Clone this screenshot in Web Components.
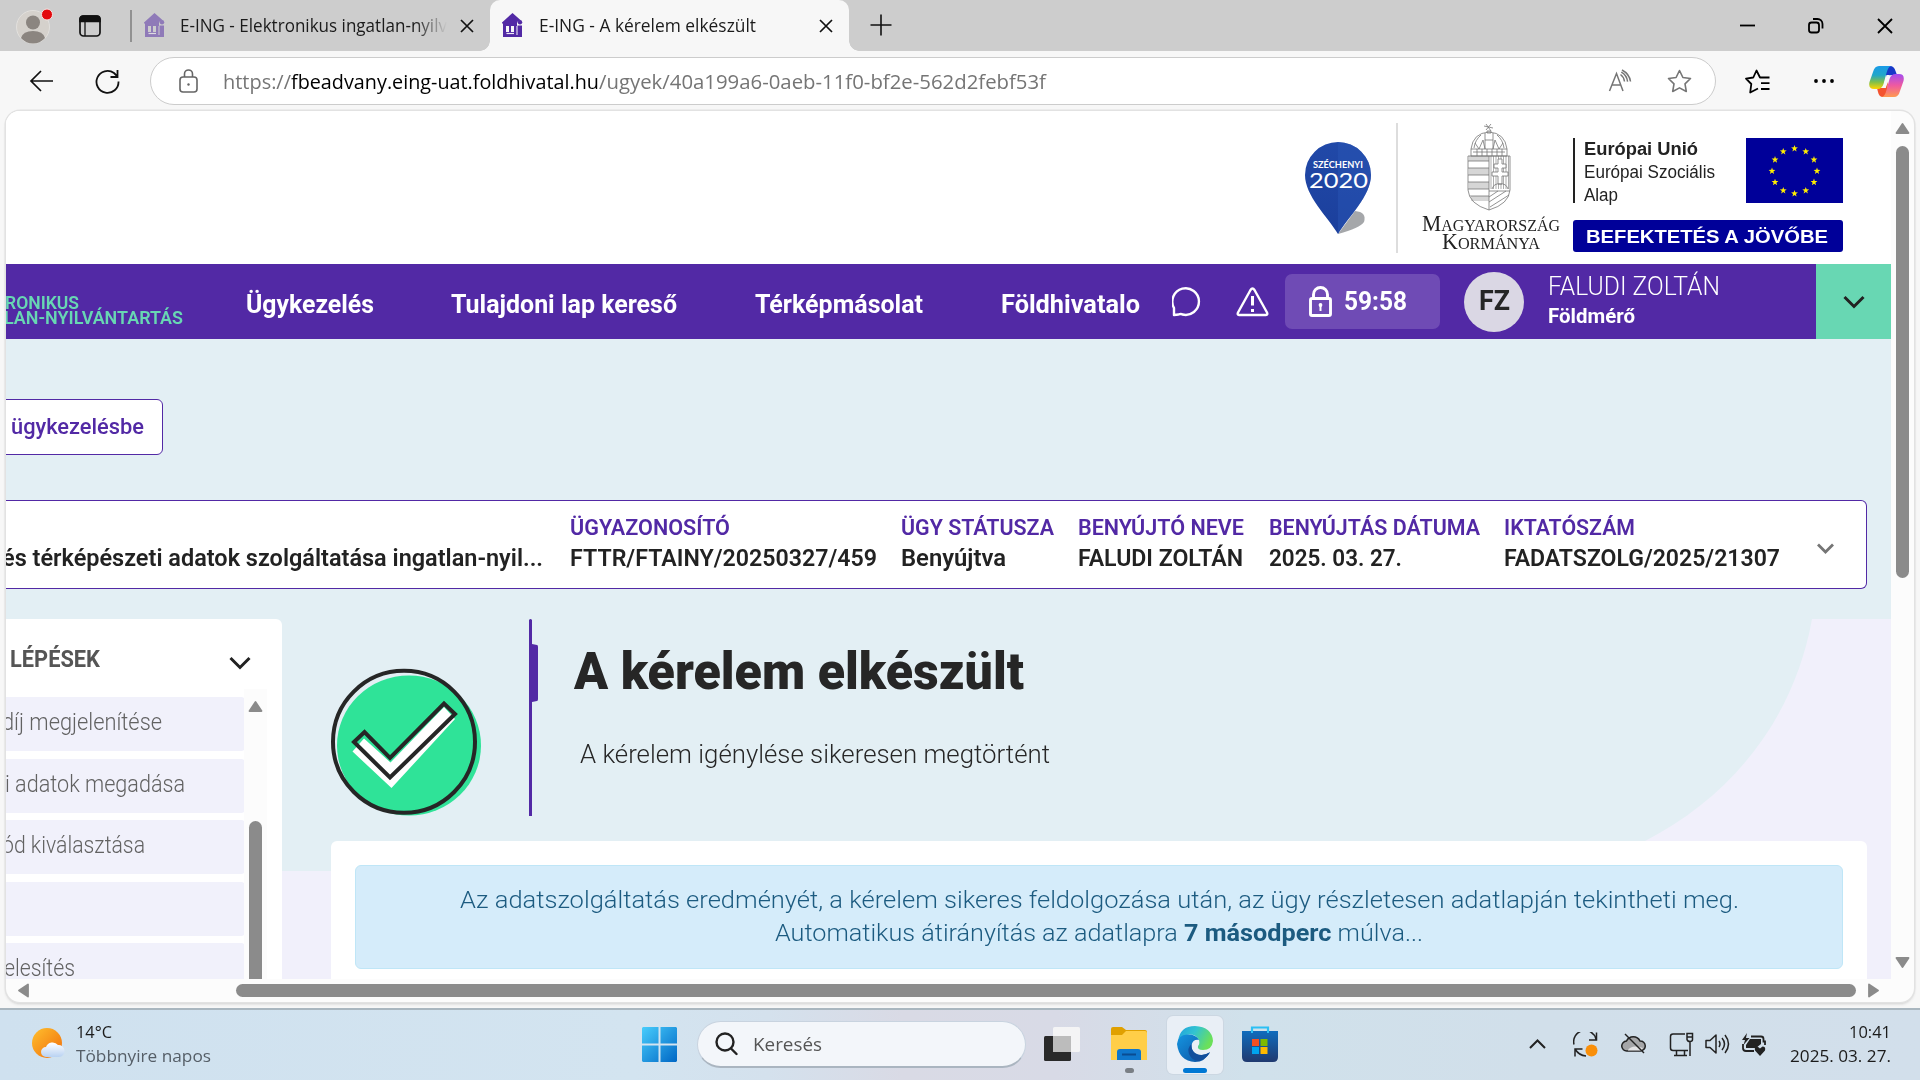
<!DOCTYPE html>
<html lang="hu">
<head>
<meta charset="utf-8">
<title>E-ING - A kérelem elkészült</title>
<style>
html,body{margin:0;padding:0}
body{width:1920px;height:1080px;overflow:hidden;background:#f7f7f7;font-family:"Open Sans","Noto Sans",sans-serif;color:#1b1b1b}
</style>
</head>
<body>
<desktop-shell></desktop-shell>
<script>
function def(name, css, html){
  const tpl=document.createElement('template');
  tpl.innerHTML=`<style>:host{display:block;box-sizing:border-box}*{box-sizing:border-box}svg{display:block;flex:none}${css}</style>${html}`;
  customElements.define(name, class extends HTMLElement{
    constructor(){super();this.attachShadow({mode:'open'}).append(tpl.content.cloneNode(true));}
  });
}
const X='<svg width="14" height="14" viewBox="0 0 14 14" stroke="#111" stroke-width="1.7" fill="none"><path d="M1 1l12 12M13 1L1 13"/></svg>';
const UI='"Roboto","Noto Sans",sans-serif';

def('desktop-shell',`:host{display:flex;flex-direction:column;width:1920px;height:1080px;overflow:hidden}`,
`<edge-tabs></edge-tabs><edge-toolbar></edge-toolbar><page-frame></page-frame><win-taskbar></win-taskbar>`);

def('house-icon',`:host{width:21px;height:25px;flex:none}`,
`<svg width="21" height="25" viewBox="0 0 21 25" fill="#5229a5"><path d="M10.500 0L19 7.500Q15 7.500 15 10.500H0V9.500Z"/><circle cx="18" cy="9.200" r="2.200"/><path d="M1 12.500H4V19H7V12.500H9V19H12V12.500H14.500V22H15.500V12.500H20V24H1Z"/><path d="M1 9h14v4H1Z"/><path d="M4.500 20.500H12" stroke="#fff" stroke-opacity=".9" stroke-width="1.200"/></svg>`);

def('edge-tabs',`:host{height:51px;background:#cdcdcd;display:flex;align-items:stretch;flex:none}
.l{display:flex;align-items:center;width:490px;padding-left:16px}
.tab{width:359px;background:#f7f7f7;border-radius:10px 10px 0 0;display:flex;align-items:center;padding-left:12px}
.c{width:10px;height:10px;align-self:flex-end;flex:none}
.c1{background:radial-gradient(circle at 0 0,#cdcdcd 9.500px,#f7f7f7 10px);margin-left:-10px}
.c2{background:radial-gradient(circle at 100% 0,#cdcdcd 9.500px,#f7f7f7 10px)}
.fade{-webkit-mask:linear-gradient(90deg,#000 88%,transparent 100%);mask:linear-gradient(90deg,#000 88%,transparent 100%);margin-left:15px}
t-x{margin-top:-1px}
.x{flex:1;display:flex;justify-content:flex-end;align-items:center;padding-right:27px}`,
`<div class="l">
<svg width="37" height="37" viewBox="0 0 37 37"><circle cx="17" cy="20" r="16.500" fill="#d5d1cc" stroke="#e2e0dd"/><circle cx="17" cy="15.500" r="7" fill="#8b8580"/><path d="M5 31q2-7 12-7t12 7q-5 5.500-12 5.500T5 31Z" fill="#8b8580"/><circle cx="31" cy="7.500" r="5.500" fill="#e3090d" stroke="#f3e4e2"/></svg>
<svg style="margin-left:26px" width="22" height="22" viewBox="0 0 22 22" fill="none" stroke="#111" stroke-width="1.700"><rect x="1" y="1" width="20" height="20" rx="3.500"/><path d="M1 6.500V4a3 3 0 0 1 3-3h14a3 3 0 0 1 3 3v2.500Z" fill="#111"/><path d="M6 7v14" stroke-width="1.300"/></svg>
<svg style="margin-left:29px" width="2" height="32"><path d="M1 0v32" stroke="#7c7c7c" stroke-width="1.500"/></svg>
<house-icon style="margin-left:12px;opacity:.5"></house-icon>
<t-x class="fade" w="267" s="18" h="26">E-ING - Elektronikus ingatlan-nyilv</t-x>
<span style="margin-left:13px">${X}</span></div>
<i class="c c1"></i><div class="tab"><house-icon></house-icon><t-x style="margin-left:16px" w="217" s="18" h="26">E-ING - A kérelem elkészült</t-x><span style="margin-left:63px">${X}</span></div><i class="c c2"></i>
<svg style="margin:14px 0 0 11px" width="22" height="22" viewBox="0 0 22 22" stroke="#111" stroke-width="1.600"><path d="M11 .5v21M.5 11h21"/></svg>
<div class="x"><svg width="154" height="18" viewBox="0 0 154 18" fill="none" stroke="#000" stroke-width="1.800"><path d="M1 8.500h15"/><rect x="70" y="5.500" width="10" height="10" rx="2.500"/><path d="M74 2h4.500a5 5 0 0 1 5 5v4.500"/><path d="M139 2l14 14M153 2L139 16"/></svg></div>`);

def('edge-toolbar',`:host{height:60px;flex:none;display:flex;align-items:center;padding:0 0 0 29px;background:#f7f7f7}
.pill{margin-left:30px;width:1566px;height:48px;border:1.500px solid #ccc;border-radius:24px;background:#fff;display:flex;align-items:center;padding-left:28px;color:#757575}
t-x{flex:none}`,
`<svg width="25" height="22" viewBox="0 0 25 22" fill="none" stroke="#111" stroke-width="1.700"><path d="M24 11H2M12 1L2 11l10 10"/></svg>
<svg style="margin-left:41px" width="25" height="25" viewBox="0 0 25 25" fill="none" stroke="#111" stroke-width="1.800"><path d="M23.500 12.500A11 11 0 1 1 19 4l3.500 3.500M22.500 1v7h-7"/></svg>
<div class="pill">
<svg width="19" height="24" viewBox="0 0 19 24" fill="none" stroke="#666" stroke-width="1.600"><rect x="1" y="8" width="17" height="15" rx="3"/><path d="M5.500 8V5a4 4 0 0 1 8 0v3"/><circle cx="9.500" cy="15.500" r="1.200" fill="#666" stroke="none"/></svg>
<t-x style="margin-left:25px" w="68" s="20.500" h="30">https://</t-x><t-x style="color:#000" w="308" s="20.500" h="30">fbeadvany.eing-uat.foldhivatal.hu</t-x><t-x w="447" s="20.500" h="30">/ugyek/40a199a6-0aeb-11f0-bf2e-562d2febf53f</t-x>
<svg style="margin-left:562px" width="24" height="24" viewBox="0 0 24 24" fill="none" stroke="#757575" stroke-width="1.500"><path d="M1.500 22L8.500 4.500L15 22M4 16h9"/><path d="M12.500 5.500q3.500 2.500 4 7M14 1q7.500 4 8.500 11.500M13.300 3.200q5.500 3 6.300 9.500"/></svg>
<svg style="margin-left:35px" width="25" height="25" viewBox="0 0 25 25" fill="none" stroke="#757575" stroke-width="1.600" stroke-linejoin="round"><path d="M12.500 1.500l3.400 7 7.600 1-5.500 5.400 1.300 7.600-6.800-3.600-6.800 3.600 1.300-7.600-5.500-5.400 7.600-1Z"/></svg>
</div>
<svg style="margin-left:29px" width="25" height="25" viewBox="0 0 25 25" fill="none" stroke="#000" stroke-width="1.800" stroke-linejoin="round"><path d="M16 8.500L15 8.500L11.500 1.500 8.300 8.500 1 9.600 6.300 15 5.200 23.500 13 19.500M16 8.500h8.500M16 14.200h8.500M16 20h8.500"/></svg>
<svg style="margin-left:44px" width="20" height="4"><circle cx="2" cy="2" r="1.900"/><circle cx="10" cy="2" r="1.900"/><circle cx="18" cy="2" r="1.900"/></svg>
<svg style="margin-left:35px" width="35" height="31" viewBox="0 0 35 31"><defs><linearGradient id="a" x1="0" y1="0" x2="0" y2="1"><stop offset="0" stop-color="#1a9be8"/><stop offset=".4" stop-color="#21a7c9"/><stop offset=".7" stop-color="#7fbf4a"/><stop offset="1" stop-color="#ffd500"/></linearGradient><linearGradient id="b" x1="0" y1="0" x2="0" y2="1"><stop offset="0" stop-color="#a34cf0"/><stop offset=".5" stop-color="#ef5aa0"/><stop offset="1" stop-color="#ff9a50"/></linearGradient></defs>
<path d="M17 0h4q4 0 5.500 5l1.500 4h-5q-4 0-6 5Z" fill="#1738c8"/><path d="M18 31h-4q-4 0-5-5l-1-4h5q4 0 6-6Z" fill="#f4532f"/><path d="M10 0h12q-3 1-4.500 7l-3 11q-1.500 5-6 5H5q-6 0-4.500-7L4 6Q5.500 0 10 0Z" fill="url(#a)"/><path d="M25 31H13q3-1 4.500-7l3-11q1.500-5 6-5H30q6 0 4.500 7L31 25q-1.500 6-6 6Z" fill="url(#b)"/><path d="M17.500 9h3.500q-1.500 2-2.200 5l-2 8h-4q2-1.500 2.500-4.500Z" fill="#f7f7f7"/></svg>`);

def('scroll-arrow',`:host{width:15px;height:11px;flex:none}`,
`<svg width="15" height="11" viewBox="0 0 15 11"><path d="M7.500 1L13.500 10H1.500Z" fill="#8b8b8b" stroke="#8b8b8b" stroke-width="1.800" stroke-linejoin="round"/></svg>`);

def('page-frame',`:host{flex:none;height:897px;padding-left:6px;background:#f7f7f7}
.f{width:1908px;height:891px;display:grid;grid-template:868px 23px/1885px 23px;border-radius:14px;overflow:hidden;background:#fcfcfc;box-shadow:0 0 0 1.500px #e2e2e2,0 2px 3px #ccc}
.v{overflow:hidden;background:#fff}
.sv{display:flex;flex-direction:column;align-items:center;padding-top:12px}
.sv i{width:13px;height:432px;margin:12px 0 379px;border-radius:7px;background:#8b8b8b;flex:none}
.sh{display:flex;align-items:center;padding-left:10px}
.sh i{width:1620px;height:13px;margin:0 10px 0 205px;border-radius:7px;background:#8b8b8b}`,
`<div class="f"><div class="v"><logo-strip></logo-strip><site-nav></site-nav><case-page></case-page></div>
<div class="sv"><scroll-arrow></scroll-arrow><i></i><scroll-arrow style="transform:rotate(180deg)"></scroll-arrow></div>
<div class="sh"><scroll-arrow style="transform:rotate(-90deg)"></scroll-arrow><i></i><scroll-arrow style="transform:rotate(90deg)"></scroll-arrow></div></div>`);

const star=(x,y,r)=>{let p='';for(let i=0;i<10;i++){const a=-Math.PI/2+i*Math.PI/5,q=i%2?r*.4:r;p+=(x+q*Math.cos(a)).toFixed(1)+','+(y+q*Math.sin(a)).toFixed(1)+' ';}return `<polygon points="${p}"/>`;};
const stars=[...Array(12)].map((_,i)=>star(48.5+22.5*Math.sin(i*Math.PI/6),33-22.5*Math.cos(i*Math.PI/6),3.6)).join('');
const vl=(x0,x1,y0,y1,d)=>{let p='';for(let x=x0;x<=x1;x+=d)p+=`M${x} ${y0}V${y1}`;return p;};
def('logo-strip',`:host{height:153px;background:#fff;display:flex;align-items:flex-start;padding:12px 48px 0 1299px}
.g{width:138px;flex:none;margin-left:24px;display:flex;flex-direction:column;align-items:center;font-family:"Liberation Serif",serif;color:#222}
.g small{font-size:17px}
.e{width:270px;flex:none;margin-left:13px;padding-top:15px;display:flex;flex-direction:column;justify-content:space-between;height:129px;font-family:"Liberation Sans",sans-serif}
.r{display:flex;justify-content:space-between}
.t{border-left:2px solid #222;padding:0 0 0 9px;height:65px;color:#222}
.b{height:32px;background:#009;border-radius:3px;color:#fff;font-weight:700;padding:5px 0 0 13px}`,
`<svg style="margin-top:19px" width="68" height="93" viewBox="0 0 68 93"><defs><linearGradient id="p" x1="0" y1="0" x2="0" y2="1"><stop offset="0" stop-color="#2149a8"/><stop offset="1" stop-color="#1b3f9c"/></linearGradient></defs><path d="M33 92Q55 86 59 80Q62 70 50 69Z" fill="#a5a7aa"/><path d="M33 92C23 75 0 54 0 33A33 33 0 0 1 66 33C66 54 43 75 33 92Z" fill="url(#p)"/><path d="M33 92C43 75 66 54 66 33A33 33 0 0 0 33 0V40Z" fill="#2b57b5" opacity=".45"/><text x="8" y="25.500" font-family="Lato,sans-serif" font-weight="700" font-size="9" fill="#fff" textLength="50" lengthAdjust="spacingAndGlyphs">SZÉCHENYI</text><text x="4" y="46" font-family="Lato,sans-serif" font-weight="400" font-size="21.500" fill="#fff" textLength="59" lengthAdjust="spacingAndGlyphs">2020</text></svg>
<div style="width:1.500px;flex:none;height:130px;background:#ddd;margin-left:23px"></div>
<div class="g"><svg style="margin-left:-3px" width="44" height="88" viewBox="0 0 44 88" fill="none" stroke="#777" stroke-width=".8"><path d="M19 1l5 7M24 1l-5 6M17 3l9 2M20 8h4v2h-4ZM4 26Q6 10 22 9Q38 10 40 26M4 26h36v7H4ZM14 12q-6 5-7 13M30 12q6 5 7 13M18 10v16M26 10v16M18 17h8M8 20l4 6 4-9 2 9M36 20l-4 6-4-9-2 9M6 29h32M10 26v7M15 26v7M20 26v7M25 26v7M30 26v7M35 26v7"/><path d="M1 33h42v34q-1 14-21 20Q2 81 1 67ZM22 33v54"/><path d="${vl(3,21,33,38,2)}${vl(3,21,45,52,2)}${vl(3,21,59,66,2)}${vl(5,21,73,78,2)}${vl(24,42,33,66,2.5)}" stroke-width=".6"/><path d="M1 38h21M1 45h21M1 52h21M1 59h21M1 66h21M3 73h19M22 68h21M22 79L39 68M22 74L31 68M23 84L42 72"/><path d="M31 36h4v5h4v4h-4v4h6v4h-6v8h-4v-8h-6v-4h6v-4h-4v-4h4Z" fill="#fff"/><path d="M25 66q2-6 8-5q6-1 8 5"/></svg>
<t-x style="margin-top:3px" w="138" s="23" h="20">M<small>AGYARORSZÁG</small></t-x><t-x style="margin-top:-2px" w="98" s="23" h="20">K<small>ORMÁNYA</small></t-x></div>
<div class="e"><div class="r"><div class="t"><t-x style="font-weight:700" w="114" s="17.500" h="23">Európai Unió</t-x><t-x w="131" s="17.500" h="23">Európai Szociális</t-x><t-x w="34" s="17.500" h="23">Alap</t-x></div>
<svg width="97" height="65" viewBox="0 0 97 65"><rect width="97" height="65" fill="#009"/><g fill="#ffed00">${stars}</g></svg></div>
<div class="b"><t-x w="242" s="18.500" h="24">BEFEKTETÉS A JÖVŐBE</t-x></div></div>`);

def('site-nav',`:host{height:75px;background:#5229a5;display:flex;align-items:center;color:#fff;font-weight:700;font-family:${UI};overflow:hidden}
t-x,svg,div{flex:none}.m{margin-top:7px}
.logo{width:240px;color:#68d7b3;padding-top:17px;margin-left:-1px}
.lock{width:155px;height:55px;border-radius:7px;background:#6f4bb5;margin-left:16px;display:flex;align-items:center;padding-left:24px}
.av{width:60px;height:60px;border-radius:50%;background:#dad7e4;color:#262626;margin-left:24px;display:flex;align-items:center;justify-content:center}
.dd{width:75px;height:75px;background:#68d7b3;display:flex;align-items:center;justify-content:center;margin-left:auto}`,
`<div class="logo"><t-x style="font-weight:600" w="74" s="18" h="15">RONIKUS</t-x><t-x style="font-weight:600;margin-left:-1px" w="179" s="18" h="15">LAN-NYILVÁNTARTÁS</t-x></div>
<t-x class="m" style="margin-left:1px" w="128" s="25" h="30">Ügykezelés</t-x><t-x class="m" style="margin-left:77px" w="226" s="25" h="30">Tulajdoni lap kereső</t-x><t-x class="m" style="margin-left:78px" w="168" s="25" h="30">Térképmásolat</t-x><t-x class="m" style="margin-left:78px" w="139" s="25" h="30">Földhivatalo</t-x>
<svg style="margin-left:32px" width="30" height="30" viewBox="0 0 30 30" fill="none" stroke="#fff" stroke-width="2.400" stroke-linejoin="round"><path d="M2 28V21A13.300 13.300 0 1 1 10.500 27.500Q9 26.500 6.500 27.500Z"/></svg>
<svg style="margin-left:34px" width="33" height="30" viewBox="0 0 33 30" fill="none" stroke="#fff" stroke-width="2.400" stroke-linejoin="round"><path d="M16.500 1.500Q17.500 1.500 18.500 3L31 25.500Q32 28 30 28H3Q1 28 2 25.500L14.500 3Q15.500 1.500 16.500 1.500Z"/><path d="M16.500 9v9.500M16.500 22v3" stroke-width="3"/></svg>
<div class="lock"><svg width="23" height="31" viewBox="0 0 23 31" fill="none" stroke="#fff" stroke-width="2.900"><rect x="1.500" y="12.500" width="20" height="17" rx="1.500"/><path d="M4.500 12.500V8.500a7 7 0 0 1 14 0v4"/><circle cx="11.500" cy="19" r="1.900" fill="#fff" stroke="none"/><path d="M11.500 19v6" stroke-width="2"/></svg><t-x style="margin:-2px 0 0 12px" w="63" s="25.500" h="30">59:58</t-x></div>
<div class="av"><t-x style="margin-top:-2px" w="31" s="27" h="30">FZ</t-x></div>
<div style="margin:0 0 1px 24px"><t-x style="font-weight:300" w="172" s="25" h="30">FALUDI ZOLTÁN</t-x><t-x w="87" s="19.500" h="29">Földmérő</t-x></div>
<div class="dd"><svg width="22" height="14" viewBox="0 0 22 14" fill="none" stroke="#222" stroke-width="3"><path d="M1.500 2l9.500 9.500L20.500 2"/></svg></div>`);

def('info-pair',`:host{flex:none;font-family:${UI}}`,`<slot></slot>`);
const pair=(l,lw,v,vw,m)=>`<info-pair style="margin-left:${m}px"><t-x style="color:#5229a5;font-weight:600" w="${lw}" s="22" h="31">${l}</t-x><t-x style="font-weight:600" w="${vw}" s="23.500" h="31">${v}</t-x></info-pair>`;
def('case-summary',`:host{width:1862px;margin-left:-1px;height:89px;background:#fff;border:1.500px solid #5229a5;border-left:0;border-radius:0 6px 6px 0;display:flex;padding:11px 0 0 0;color:#222;font-family:${UI}}
svg{margin:31px 0 0 37px}`,
`<t-x style="margin:31px 0 0 -3px;font-weight:600;flex:none" w="541" s="23.500" h="31">és térképészeti adatok szolgáltatása ingatlan-nyil...</t-x>
${pair('ÜGYAZONOSÍTÓ',160,'FTTR/FTAINY/20250327/459',307,27)}${pair('ÜGY STÁTUSZA',153,'Benyújtva',105,24)}${pair('BENYÚJTÓ NEVE',166,'FALUDI ZOLTÁN',165,24)}${pair('BENYÚJTÁS DÁTUMA',211,'2025. 03. 27.',133,25)}${pair('IKTATÓSZÁM',131,'FADATSZOLG/2025/21307',276,24)}
<svg width="17" height="12" viewBox="0 0 17 12" fill="none" stroke="#757575" stroke-width="2.800"><path d="M1 1.500l7.500 7.500L16 1.500"/></svg>`);

def('step-item',`:host{height:54px;width:239px;background:#f1f1fb;border-radius:0 4px 4px 0;margin-bottom:7.500px;padding-top:11px;color:#626262;font-family:${UI};font-weight:300}`,`<slot></slot>`);
def('step-list',`:host{width:276px;height:360px;background:#fff;border-radius:0 6px 0 0;overflow:hidden;flex:none}
.h{height:70px;display:flex;padding:26px 0 0 4px;color:#555;font-family:${UI};font-weight:700}
.b{display:flex}.l{padding-top:8px;width:238px}.s{width:23px;height:290px;background:#fcfcfc;display:flex;flex-direction:column;align-items:center;padding-top:12px}
.s i{width:13px;height:300px;border-radius:7px;background:#8b8b8b;margin-top:109px;flex:none}`,
`<div class="h"><t-x w="90" s="23" h="30">LÉPÉSEK</t-x><svg style="margin:11px 0 0 129px" width="22" height="14" viewBox="0 0 22 14" fill="none" stroke="#222" stroke-width="3"><path d="M1.500 2l9.500 9.500L20.500 2"/></svg></div>
<div class="b"><div class="l"><step-item><t-x style="margin-left:-4px" w="160" s="23" h="30">díj megjelenítése</t-x></step-item><step-item><t-x style="margin-left:-1px" w="180" s="23" h="30">i adatok megadása</t-x></step-item><step-item><t-x style="margin-left:-4px" w="143" s="23" h="30">ód kiválasztása</t-x></step-item><step-item></step-item><step-item><t-x style="margin-left:-2px" w="71" s="23" h="30">elesítés</t-x></step-item></div>
<div class="s"><scroll-arrow></scroll-arrow><i></i></div></div>`);

def('result-hero',`:host{height:222px;display:flex;align-items:flex-start;font-family:${UI};color:#262626}`,
`<svg style="margin-top:48px" width="152" height="150" viewBox="0 0 152 150"><ellipse cx="78" cy="78.500" rx="72" ry="70" fill="#2fe398"/><circle cx="73" cy="74.800" r="71" fill="none" stroke="#262626" stroke-width="4"/><path d="M21.500 84.500L33 71.500L59.500 95.500L113 40L124 52L60.500 121Z" fill="#fff"/><path d="M23 75L33.500 65L59 91L113 36.500L124 47L59 110.500Z" fill="none" stroke="#262626" stroke-width="4"/></svg>
<svg style="margin-left:46px" width="10" height="198" viewBox="0 0 10 198" fill="#5229a5"><path d="M0 1Q1.500-1 3 1V25L8 26Q9 26 9 28V80Q9 82 8 82L3 83V197H0Z"/></svg>
<div><t-x style="margin:23px 0 0 35px;font-weight:900" w="450" s="51.500" h="60">A kérelem elkészült</t-x><t-x style="margin:38px 0 0 41px;font-weight:300" w="470" s="25" h="30">A kérelem igénylése sikeresen megtörtént</t-x></div>`);

def('info-alert',`:host{height:104px;background:#d5ecfa;border:1.500px solid #bfe6f7;border-radius:6px;padding-top:17px;color:#1c5b80;font-family:${UI};font-weight:300;display:flex;flex-direction:column;align-items:center}`,
`<t-x w="1279" s="24.500" h="33">Az adatszolgáltatás eredményét, a kérelem sikeres feldolgozása után, az ügy részletesen adatlapján tekintheti meg.</t-x><t-x w="648" s="24.500" h="33">Automatikus átirányítás az adatlapra <b>7 másodperc</b> múlva...</t-x>`);

def('case-page',`:host{height:640px;background:#e3eff4;position:relative;padding-top:60px;isolation:isolate}
.bg{position:absolute;left:0;top:0;z-index:-1}
.btn{width:158px;height:56px;margin:0 0 45px -1px;border:1.500px solid #5229a5;border-radius:0 6px 6px 0;background:#fff;color:#5229a5;font-family:${UI};font-weight:500;padding:12px 0 0 5px}
.row{display:flex;margin-top:30px}
.main{width:1536px;margin-left:49px}
.card{height:140px;background:#fff;border-radius:6px 6px 0 0;padding:24px}`,
`<svg class="bg" width="1885" height="640" viewBox="6 339 1885 640" fill="#f1f0fb"><path d="M6 871H1580Q1620 860 1645 841C1735 795 1795 715 1812 619H1891V979H6Z"/></svg>
<div class="btn"><t-x w="133" s="22" h="30">ügykezelésbe</t-x></div>
<case-summary></case-summary>
<div class="row"><step-list></step-list><div class="main"><result-hero></result-hero><div class="card"><info-alert></info-alert></div></div></div>`);

def('win-taskbar',`:host{height:72px;flex:none;border-top:2px solid #a9b6bf;background:linear-gradient(90deg,#cfe1ef 0,#d3e4f0 33%,#d4e1ed 40%,#d9dae5 47%,#d8dae6 55%,#d0e1eb 65%,#d1dfea 80%,#d2dfeb);display:flex;align-items:center;padding:0 0 2px 30px}
t-x,svg,div{flex:none}
.q{width:329px;height:47px;margin-left:20px;border-radius:24px;background:#f3f6fa;border:1.500px solid #c8d3df;border-bottom:2.500px solid #aab5c0;display:flex;align-items:center;padding-left:17px;color:#555}
.e{width:56px;height:58px;border-radius:6px;background:#e9eff6;box-shadow:0 0 0 1px #ccd7e2;margin:2px 0 0 20px;display:flex;flex-direction:column;align-items:center;padding-top:10px}
.e i{width:24px;height:5px;border-radius:3px;background:#0078d4;margin-top:6px;flex:none}
.f{margin:2px 0 0 30px;display:flex;flex-direction:column;align-items:center;padding-top:10px}.f i{width:9px;height:5px;border-radius:3px;background:#7a7f85;margin-top:7px}`,
`<svg width="36" height="34" viewBox="0 0 36 34"><defs><linearGradient id="s" x1="0" y1="0" x2="1" y2="1"><stop offset="0" stop-color="#ffc02e"/><stop offset="1" stop-color="#f06c0a"/></linearGradient><linearGradient id="c" x1="0" y1="0" x2="0" y2="1"><stop offset="0" stop-color="#fff"/><stop offset="1" stop-color="#b9d2f2"/></linearGradient></defs><circle cx="17" cy="16" r="15" fill="url(#s)"/><path d="M16 30a5 5 0 0 1 0-10a7 7 0 0 1 12-2a6 6 0 0 1 1 12Z" fill="url(#c)"/></svg>
<div style="margin-left:10px"><t-x w="36" s="16.500" h="24">14°C</t-x><t-x style="color:#555e67" w="135" s="16.500" h="24">Többnyire napos</t-x></div>
<svg style="margin-left:431px" width="35" height="35" viewBox="0 0 35 35"><defs><linearGradient id="w" x1="0" y1="0" x2="1" y2="1"><stop offset="0" stop-color="#48cdfc"/><stop offset="1" stop-color="#0067c5"/></linearGradient></defs><path d="M1 0H16.500V16.500H0V1ZM18.500 0H34L35 1V16.500H18.500ZM0 18.500H16.500V35H1L0 34ZM18.500 18.500H35V34L34 35H18.500Z" fill="url(#w)"/></svg>
<div class="q"><svg width="23" height="24" viewBox="0 0 23 24" fill="none" stroke="#222" stroke-width="2.400" stroke-linecap="round"><circle cx="10" cy="10" r="8.500"/><path d="M16 16.500l5.500 5.500"/></svg><t-x style="margin-left:15px" w="69" s="18.500" h="28">Keresés</t-x></div>
<svg style="margin-left:18px" width="37" height="35" viewBox="0 0 37 35"><rect x="0" y="9" width="27" height="25" rx="1.500" fill="#292929"/><rect x="9" y="0" width="27" height="25" rx="1.500" fill="#f4f4f5"/><path d="M9 9h18v16H9Z" fill="#bcbcbc"/></svg>
<div class="f"><svg width="36" height="34" viewBox="0 0 36 34"><path d="M0 2Q0 0 2 0H11L15 3H34Q36 3 36 5V12H0Z" fill="#e0a000"/><path d="M0 8H11L15 4H34Q36 4 36 6V33H0Z" fill="#ffce48"/><path d="M6 33V25Q6 22 9 22H27Q30 22 30 25V33Z" fill="#0f77cc"/><path d="M11 27.500H25" stroke="#0a4c91" stroke-width="2"/></svg><i></i></div>
<div class="e"><svg width="36" height="36" viewBox="0 0 36 36"><defs><linearGradient id="g" x1="0" y1="0" x2="1" y2=".4"><stop offset="0" stop-color="#1f9fe0"/><stop offset=".5" stop-color="#33c4d0"/><stop offset="1" stop-color="#6be05a"/></linearGradient><linearGradient id="h" x1="0" y1="0" x2="1" y2="1"><stop offset="0" stop-color="#1595e0"/><stop offset="1" stop-color="#0c4fa0"/></linearGradient></defs><path d="M1 15Q3 0 18 0Q35 1 36 15Q35 24 26 24Q20 24 21 20Q23 18 22 14Q18 7 9 9Q3 11 1 15Z" fill="url(#g)"/><path d="M0 18Q1 9 10 8.500Q19 8 22 14Q16 13 14.500 19Q14 27 22 29Q28 30 33 26Q28 36 18 36Q2 35 0 18Z" fill="url(#h)"/><path d="M14.500 18Q10 22 12 28Q15 35 22 35Q29 33 33 26.500Q24 31 18 27Q14 24 14.500 18Z" fill="#124f9c"/></svg><i></i></div>
<svg style="margin-left:19px" width="36" height="36" viewBox="0 0 36 36"><defs><linearGradient id="m" x1="0" y1="0" x2="0" y2="1"><stop offset="0" stop-color="#0f6cbd"/><stop offset="1" stop-color="#203a70"/></linearGradient></defs><path d="M10 6V1.500H26V6" fill="none" stroke="#2cc0f4" stroke-width="2.200"/><path d="M0 5H36V31Q36 36 31 36H5Q0 36 0 31Z" fill="url(#m)"/><path d="M10 13h7v7h-7Z" fill="#f25022"/><path d="M18.500 13h7v7h-7Z" fill="#7fba00"/><path d="M10 21h7v7h-7Z" fill="#00a4ef"/><path d="M18.500 21h7v7h-7Z" fill="#ffb900"/><path d="M10 1.500V7M26 1.500V7" stroke="#2cc0f4" stroke-width="2"/></svg>
<svg style="margin-left:251px" width="17" height="10" viewBox="0 0 17 10" fill="none" stroke="#222" stroke-width="2"><path d="M1 9l7.500-7.500L16 9"/></svg>
<svg style="margin-left:27px" width="25" height="25" viewBox="0 0 25 25" fill="none" stroke="#222" stroke-width="1.500"><path d="M1 12.500A11 11 0 0 1 23 7M23.500 .5v7.500H16M2 24.500v-7.500h7.500M2 17q4 6.500 11 7"/><circle cx="18.500" cy="18.500" r="6" fill="#f98f0a" stroke="none"/></svg>
<svg style="margin-left:23px" width="25" height="22" viewBox="0 0 25 22" fill="none" stroke="#222" stroke-width="1.500"><path d="M6 18A5 5 0 0 1 5.500 8A7.500 7.500 0 0 1 19 8A5 5 0 0 1 19.500 18Z" fill="#a5a6a8"/><path d="M7 17q4-6 15-2l-2 2.500H7Z" fill="#e3e3e5" stroke="none"/><path d="M4 1l19 19"/></svg>
<svg style="margin-left:23px" width="25" height="25" viewBox="0 0 25 25" fill="none" stroke="#222" stroke-width="1.500"><path d="M16 2H4Q1.500 2 1.500 4.500V16Q1.500 18.500 4 18.500H19M7.500 19v4.500M15.500 19v4.500M5 23.500h13M21 10v14M18 1.500h5.500V7.500Q23.500 9.500 21 9.500T18 7.500ZM18 5h6"/></svg>
<svg style="margin-left:11px" width="25" height="22" viewBox="0 0 25 22" fill="none" stroke="#222" stroke-width="1.500" stroke-linejoin="round"><path d="M1 7.500H5L11 2V20L5 14.500H1ZM14 8q2 3 0 6M17 5q5 6 0 12M20 2q7 9 0 18"/></svg>
<svg style="margin-left:11px" width="26" height="25" viewBox="0 0 26 25" fill="none" stroke="#222" stroke-width="1.800"><path d="M10 4.500h10Q22.500 4.500 22.500 7v2.500h1.500V13M2 12v4Q2 19 5 19h8"/><path d="M9 7h11v5L15 16H5V13Z" fill="#222" stroke="none"/><path d="M6 1L1 8h3L2.500 13L8.500 6H5Z" fill="#222" stroke="none"/><path d="M19 24L14 18.500Q13 14.500 16.500 14.500L19 16.500L21.500 14.500Q25 14.500 24 18.500Z" fill="#222" stroke="none"/></svg>
<div style="margin-left:auto;padding-right:29px;display:flex;flex-direction:column;align-items:flex-end"><t-x w="42" s="16.500" h="24">10:41</t-x><t-x w="101" s="16.500" h="24">2025. 03. 27.</t-x></div>`);

/* One line of text, set to an exact advance width: w = width, s = font size, h = line height. */
customElements.define('t-x', class extends HTMLElement{
  connectedCallback(){
    if(this.shadowRoot) return;
    const w=+this.getAttribute('w'), s=this.getAttribute('s'), h=this.getAttribute('h');
    const r=this.attachShadow({mode:'open'});
    r.innerHTML=`<style>:host{display:block;width:${w}px;height:${h}px;font-size:${s}px;line-height:${h}px}span{display:inline-block;white-space:pre;transform-origin:0 50%;line-height:${h}px;height:${h}px;vertical-align:top}::slotted(small){line-height:1px}::slotted(b){font-weight:700}</style><span><slot></slot></span>`;
    const el=r.querySelector('span'), n=el.offsetWidth;
    if(n) el.style.transform=`scaleX(${(w/el.getBoundingClientRect().width).toFixed(4)})`;
  }
});
</script>
</body>
</html>
